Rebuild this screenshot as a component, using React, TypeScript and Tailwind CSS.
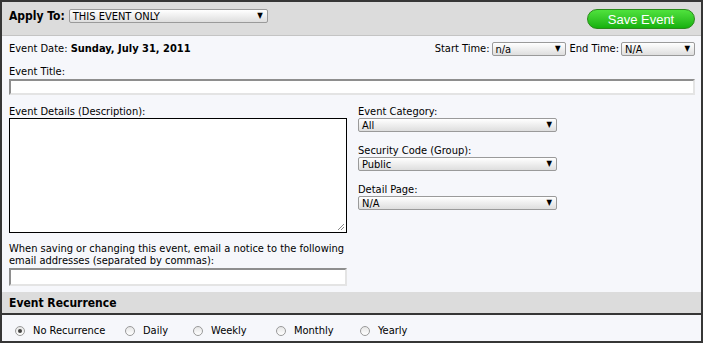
import React from "react";

function Sel({ value, w }: { value: string; w: string }) {
  return (
    <div
      className={`${w} h-[14px] flex items-center justify-between border border-[#9a9a9a] rounded-[2px] bg-gradient-to-b from-white to-[#dedede] pl-[3px] pr-[4px] text-[11px] leading-none text-black`}
    >
      <span>{value}</span>
      <span className="text-[8px]">▼</span>
    </div>
  );
}

function Radio({ checked, label, w }: { checked?: boolean; label: string; w: string }) {
  return (
    <div className={`flex items-center ${w}`}>
      <span className="w-[10px] h-[10px] rounded-full border border-[#9a9a9a] bg-gradient-to-b from-[#e6e6e6] to-white flex items-center justify-center">
        {checked && <span className="w-[4px] h-[4px] rounded-full bg-[#444]" />}
      </span>
      <span className="ml-[8px]">{label}</span>
    </div>
  );
}

export default function App() {
  return (
    <div
      className="w-[703px] h-[343px] border-2 border-[#363636] bg-[#f6f7fb] text-[11px] text-black flex flex-col"
      style={{ fontFamily: '"DejaVu Sans Condensed", "DejaVu Sans", sans-serif' }}
    >
      <div className="h-[34px] bg-[#dcdcdc] border-b border-[#c4c4c4] flex items-start justify-between pl-[7px] pr-[6px] pt-[7px]">
        <div className="flex items-center h-[14px]">
          <span className="font-bold text-[12px] mr-[4px]">Apply To:</span>
          <Sel value="THIS EVENT ONLY" w="w-[199px]" />
        </div>
        <button
          className="w-[108px] h-[20px] rounded-full border border-[#2a8a1a] bg-gradient-to-b from-[#4fe23d] to-[#14b10c] text-white text-[13px] leading-none flex items-center justify-center"
          style={{ fontFamily: '"Liberation Sans", Arial, sans-serif' }}
        >
          Save Event
        </button>
      </div>

      <div className="pl-[7px] pr-[6px] pt-[6px] flex flex-col">
        <div className="flex items-center justify-between h-[14px]">
          <div>
            Event Date: <span className="font-bold">Sunday, July 31, 2011</span>
          </div>
          <div className="flex items-center">
            <span className="mr-[2px]">Start Time:</span>
            <Sel value="n/a" w="w-[74px]" />
            <span className="ml-[4px] mr-[2px]">End Time:</span>
            <Sel value="N/A" w="w-[74px]" />
          </div>
        </div>

        <div className="mt-[9px] leading-[14px]">Event Title:</div>
        <div className="h-[16px] border-2 border-t-[#8e8e8e] border-l-[#8e8e8e] border-b-[#e4e4e4] border-r-[#e4e4e4] bg-white" />

        <div className="flex mt-[10px]">
          <div className="w-[338px] flex flex-col">
            <div className="leading-[13px]">Event Details (Description):</div>
            <div className="relative h-[115px] border border-black bg-white">
              <svg className="absolute right-[1px] bottom-[1px]" width="8" height="8" viewBox="0 0 8 8">
                <path d="M7 1L1 7M7 4L4 7" stroke="#888" strokeWidth="1" />
              </svg>
            </div>
            <div className="mt-[10px] leading-[12px]">
              When saving or changing this event, email a notice to the following email addresses (separated by commas):
            </div>
            <div className="mt-[1px] h-[18px] border-2 border-t-[#8e8e8e] border-l-[#8e8e8e] border-b-[#e4e4e4] border-r-[#e4e4e4] bg-white" />
          </div>
          <div className="ml-[11px] flex flex-col">
            <div className="leading-[13px]">Event Category:</div>
            <Sel value="All" w="w-[199px]" />
            <div className="mt-[12px] leading-[13px]">Security Code (Group):</div>
            <Sel value="Public" w="w-[199px]" />
            <div className="mt-[12px] leading-[13px]">Detail Page:</div>
            <Sel value="N/A" w="w-[199px]" />
          </div>
        </div>
      </div>

      <div className="mt-[6px] h-[23px] bg-[#dcdcdc] border-b-2 border-[#363636] flex items-center pl-[7px] font-bold text-[12px]">
        Event Recurrence
      </div>
      <div className="flex-1 flex items-center pl-[13px] pt-[6px]">
        <Radio checked label="No Recurrence" w="w-[110px]" />
        <Radio label="Daily" w="w-[68px]" />
        <Radio label="Weekly" w="w-[83px]" />
        <Radio label="Monthly" w="w-[84px]" />
        <Radio label="Yearly" w="w-[60px]" />
      </div>
    </div>
  );
}
